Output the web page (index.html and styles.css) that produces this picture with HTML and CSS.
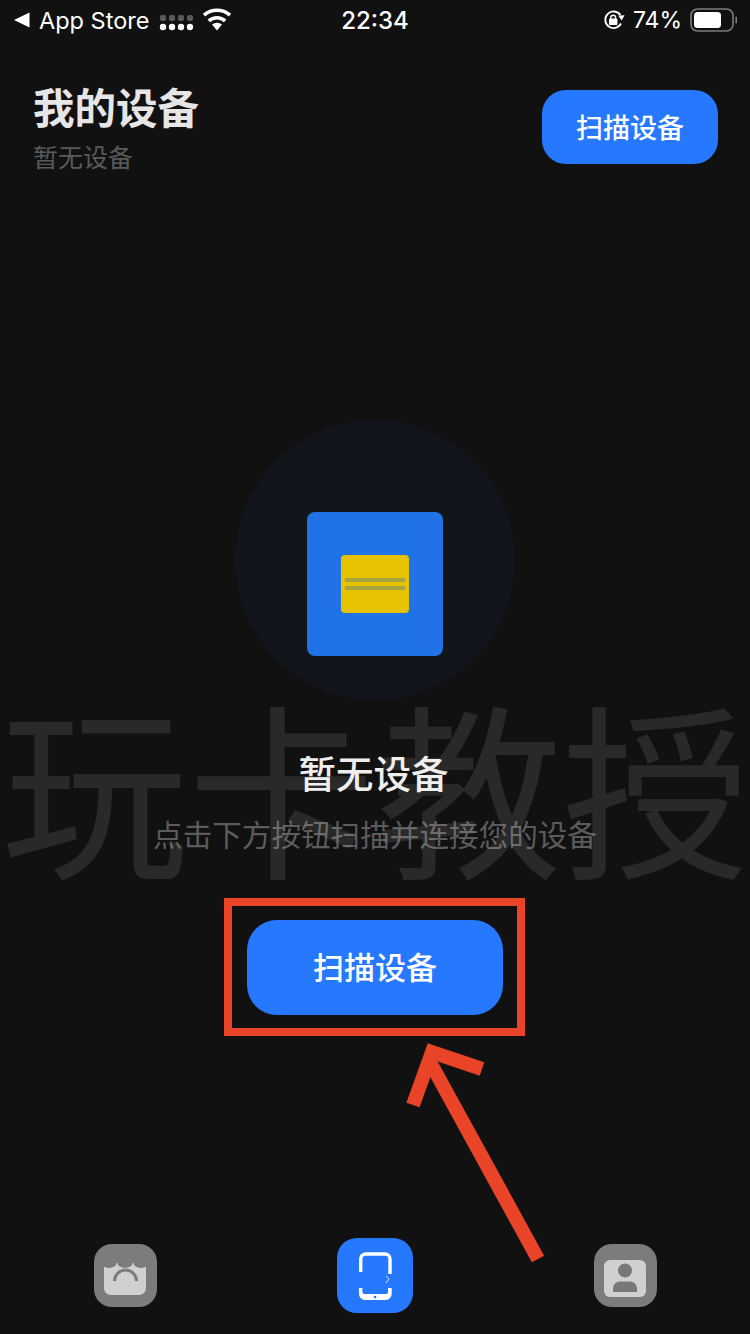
FILE: index.html
```html
<!DOCTYPE html>
<html lang="zh-CN">
<head>
    <meta charset="UTF-8">
    <meta name="viewport" content="width=device-width, initial-scale=1.0">
    <title>我的设备</title>
    <link rel="stylesheet" href="styles.css">
</head>
<body>
    <div class="page">
        <!-- Status bar -->
        <div class="status-bar">
            <div class="status-left">
                <svg class="back-arrow" width="16" height="16" viewBox="0 0 16 16"><path d="M0 8 L15.5 0.5 V15.5 Z" fill="#fff"/></svg>
                <span>App Store</span>
                <svg class="signal" width="34" height="17" viewBox="0 0 34 17">
                    <g fill="#5a5a5a">
                        <rect x="1" y="1" width="6" height="6" rx="2"/>
                        <rect x="10" y="1" width="6" height="6" rx="2"/>
                        <rect x="19" y="1" width="6" height="6" rx="2"/>
                        <rect x="28" y="1" width="6" height="6" rx="2"/>
                    </g>
                    <g fill="#fff">
                        <circle cx="4" cy="13" r="3.2"/>
                        <circle cx="13" cy="13" r="3.2"/>
                        <circle cx="22" cy="13" r="3.2"/>
                        <circle cx="31" cy="13" r="3.2"/>
                    </g>
                </svg>
                <svg class="wifi" width="30" height="23" viewBox="0 0 30 23">
                    <path d="M15 22.5 L10 16.6 A7.6 7.6 0 0 1 20 16.6 Z" fill="#fff"/>
                    <path d="M6.8 12.8 A12.4 12.4 0 0 1 23.2 12.8" fill="none" stroke="#fff" stroke-width="3.6"/>
                    <path d="M2 7.2 A19.6 19.6 0 0 1 28 7.2" fill="none" stroke="#fff" stroke-width="3.6"/>
                </svg>
            </div>
            <div class="status-time">22:34</div>
            <div class="status-right">
                <svg class="rotation-lock" width="22" height="20" viewBox="0 0 22 20">
                    <path d="M18 13.5 A8.3 8.3 0 1 1 17.4 5" fill="none" stroke="#fff" stroke-width="1.8"/>
                    <path d="M15.2 5.6 L21.6 5.2 L18.6 10.6 Z" fill="#fff"/>
                    <rect x="6" y="8.6" width="8.4" height="6.4" rx="1" fill="#fff"/>
                    <path d="M7.8 9 V7.6 A2.4 2.4 0 0 1 12.6 7.6 V9" fill="none" stroke="#fff" stroke-width="1.4"/>
                </svg>
                <span>74%</span>
                <svg class="battery" width="49" height="24" viewBox="0 0 49 24">
                    <rect x="2" y="1" width="42" height="22" rx="6.5" fill="none" stroke="#7c7c7c" stroke-width="1.6"/>
                    <rect x="5" y="4" width="27" height="16" rx="3.5" fill="#fff"/>
                    <rect x="46.4" y="8.5" width="1.6" height="7" rx="0.8" fill="#7c7c7c"/>
                </svg>
            </div>
        </div>

        <!-- Header -->
        <div class="header">
            <div>
                <h1 class="header-title">我的设备</h1>
                <p class="header-sub">暂无设备</p>
            </div>
            <button class="btn btn-small">扫描设备</button>
        </div>

        <!-- Empty state -->
        <div class="empty">
            <div class="empty-circle">
                <div class="empty-box">
                    <div class="empty-card">
                        <span class="empty-line"></span>
                        <span class="empty-line"></span>
                    </div>
                </div>
            </div>
            <h2 class="empty-title">暂无设备</h2>
            <p class="empty-text">点击下方按钮扫描并连接您的设备</p>
            <button class="btn btn-large">扫描设备</button>
        </div>

        <!-- Tab bar -->
        <div class="tabbar">
            <div class="tab">
                <div class="tab-icon tab-grey">
                    <svg width="63" height="63" viewBox="0 0 63 63">
                        <path d="M10 19 H52 V44 A7 7 0 0 1 45 51 H17 A7 7 0 0 1 10 44 Z" fill="#d0d0d0"/>
                        <ellipse cx="15" cy="19" rx="7.5" ry="5" fill="#7c7c7e"/>
                        <ellipse cx="31" cy="19" rx="7.5" ry="5" fill="#7c7c7e"/>
                        <ellipse cx="47" cy="19" rx="7.5" ry="5" fill="#7c7c7e"/>
                        <path d="M20.5 37 A11 11 0 0 1 42.5 37" fill="none" stroke="#7c7c7e" stroke-width="3"/>
                    </svg>
                </div>
            </div>
            <div class="tab">
                <div class="tab-icon tab-active">
                    <svg width="76" height="75" viewBox="0 0 76 75">
                        <path d="M23.7 34 V21 A5 5 0 0 1 28.7 16 H48 A5 5 0 0 1 53 21 V36" fill="none" stroke="#fff" stroke-width="3.4"/>
                        <path d="M22 50 H25.4 V54 A2 2 0 0 0 27.4 56 H49 A2 2 0 0 0 51 54 V50 H54.7 V56 A6 6 0 0 1 48.7 62 H28 A6 6 0 0 1 22 56 Z" fill="#fff"/>
                        <circle cx="38" cy="59" r="1.3" fill="#2679ff"/>
                        <path d="M49 38 L52 41 L49 45" fill="none" stroke="#cfe0ff" stroke-width="1"/>
                    </svg>
                </div>
            </div>
            <div class="tab">
                <div class="tab-icon tab-grey">
                    <svg width="63" height="63" viewBox="0 0 63 63">
                        <rect x="10" y="16" width="42" height="37" rx="6" fill="#d0d0d0"/>
                        <circle cx="31" cy="26.5" r="7" fill="#78787a"/>
                        <path d="M19 48 V44 A7 7 0 0 1 26 37.5 H36 A7 7 0 0 1 43 44 V48 Z" fill="#78787a"/>
                    </svg>
                </div>
            </div>
        </div>

        <!-- Watermark over the page -->
        <div class="watermark">玩卡教授</div>

        <!-- Red annotation over the button -->
        <div class="mark-box"></div>
        <svg class="mark-arrow" width="750" height="1334" viewBox="0 0 750 1334">
            <path d="M538 1259 L430 1062" fill="none" stroke="#e94428" stroke-width="14"/>
            <path d="M482 1069 L432 1052 L413 1105" fill="none" stroke="#e94428" stroke-width="14"/>
        </svg>
    </div>
</body>
</html>
```

FILE: styles.css
```css
/* General Reset */
html, body {
    margin: 0;
    padding: 0;
    background: #111112;
}

body {
    font-family: 'Inter', 'Noto Sans CJK SC', sans-serif;
    color: #fff;
}

h1, h2, p {
    margin: 0;
}

.page {
    width: 750px;
    height: 1334px;
    position: relative;
    overflow: hidden;
    display: flex;
    flex-direction: column;
}

/* Status bar */
.status-bar {
    height: 40px;
    padding: 0 12px 0 14px;
    display: grid;
    grid-template-columns: 1fr auto 1fr;
    align-items: center;
    font-size: 23.5px;
    color: #fff;
}

.status-left, .status-right {
    display: flex;
    align-items: center;
}

.status-right {
    justify-content: flex-end;
}

.back-arrow {
    margin-right: 9px;
}

.signal {
    margin-left: 10px;
    margin-top: 5px;
}

.wifi {
    margin-left: 9px;
    margin-top: -1px;
}

.status-time {
    font-weight: 500;
    font-size: 24px;
    margin-right: 2px;
}

.rotation-lock {
    margin-right: 8px;
}

.status-right span {
    font-size: 23px;
    margin-right: 7px;
}

/* Header */
.header {
    padding: 44px 32px 0 33px;
    display: flex;
    justify-content: space-between;
    align-items: flex-start;
}

.header-title {
    font-family: 'Noto Sans CJK SC', sans-serif;
    font-size: 41.5px;
    line-height: 44px;
    font-weight: 700;
    color: #e6e6e6;
}

.header-sub {
    font-family: 'Noto Sans CJK SC', sans-serif;
    font-size: 25px;
    line-height: 36px;
    margin-top: 10px;
    color: #5a5a5a;
}

.btn {
    border: none;
    background: #2679ff;
    color: #fff;
    font-family: 'Noto Sans CJK SC', sans-serif;
    font-weight: 500;
    padding: 0 0 4px;
}

.btn-small {
    width: 176px;
    height: 74px;
    margin-top: 6px;
    padding-bottom: 2px;
    border-radius: 24px;
    font-size: 27px;
}

.btn-large {
    width: 256px;
    height: 95px;
    margin-top: 65px;
    border-radius: 30px;
    font-size: 31px;
}

/* Empty state */
.empty {
    margin-top: 246px;
    display: flex;
    flex-direction: column;
    align-items: center;
}

.empty-circle {
    width: 280px;
    height: 280px;
    border-radius: 50%;
    background: #12161c;
    display: flex;
    align-items: center;
    justify-content: center;
    padding-top: 48px;
    box-sizing: border-box;
}

.empty-box {
    width: 136px;
    height: 144px;
    border-radius: 8px;
    background: #2172e6;
    display: flex;
    align-items: center;
    justify-content: center;
}

.empty-card {
    width: 68px;
    height: 58px;
    border-radius: 4px;
    background: #e6c300;
    display: flex;
    flex-direction: column;
    justify-content: center;
    gap: 4px;
    padding: 0 4px;
    box-sizing: border-box;
}

.empty-line {
    display: block;
    height: 4px;
    background: #a8a53c;
}

.empty-title {
    font-family: 'Noto Sans CJK SC', sans-serif;
    font-size: 37.5px;
    line-height: 50px;
    font-weight: 500;
    margin-top: 47px;
    padding-right: 3px;
    color: #eee;
}

.empty-text {
    font-family: 'Noto Sans CJK SC', sans-serif;
    font-size: 29.6px;
    line-height: 42px;
    margin-top: 16px;
    color: #5c5c5c;
}

/* Tab bar */
.tabbar {
    margin-top: auto;
    padding-bottom: 21px;
    display: grid;
    grid-template-columns: repeat(3, 1fr);
    align-items: center;
}

.tab {
    display: flex;
    justify-content: center;
}

.tab-icon {
    display: flex;
}

.tab-grey {
    width: 63px;
    height: 63px;
    border-radius: 18px;
    background: #7c7c7e;
}

.tab-active {
    width: 76px;
    height: 75px;
    border-radius: 20px;
    background: #2679ff;
}

/* Overlays */
.watermark {
    position: absolute;
    left: 0;
    right: 0;
    top: 664px;
    text-align: center;
    font-family: 'Noto Sans CJK SC', sans-serif;
    font-size: 187px;
    line-height: 240px;
    white-space: nowrap;
    color: rgba(255, 255, 255, 0.1);
    pointer-events: none;
}

.mark-box {
    position: absolute;
    left: 224px;
    top: 898px;
    width: 301px;
    height: 138px;
    border: 8px solid #e94428;
    box-sizing: border-box;
}

.mark-arrow {
    position: absolute;
    left: 0;
    top: 0;
    pointer-events: none;
}
```
